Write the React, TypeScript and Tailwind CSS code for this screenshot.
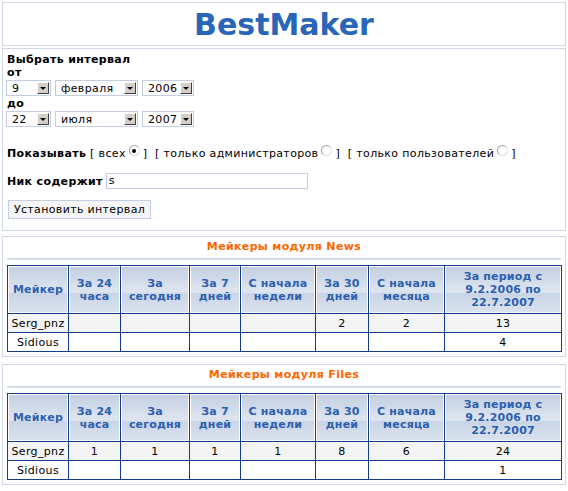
import React from "react";

const headers: React.ReactNode[] = [
  "Мейкер",
  <>За 24<br />часа</>,
  <>За<br />сегодня</>,
  <>За 7<br />дней</>,
  <>С начала<br />недели</>,
  <>За 30<br />дней</>,
  <>С начала<br />месяца</>,
  <>За период с<br />9.2.2006 по<br />22.7.2007</>,
];

const colWidths = [61, 52, 69, 51, 75, 53, 76, 117];

type Row = { name: string; values: string[] };

const newsRows: Row[] = [
  { name: "Serg_pnz", values: ["", "", "", "", "2", "2", "13"] },
  { name: "Sidious", values: ["", "", "", "", "", "", "4"] },
];

const filesRows: Row[] = [
  { name: "Serg_pnz", values: ["1", "1", "1", "1", "8", "6", "24"] },
  { name: "Sidious", values: ["", "", "", "", "", "", "1"] },
];

function Select({ value, className }: { value: string; className: string }) {
  return (
    <div
      className={`flex items-center h-[16px] border border-[#c5cde3] bg-white pl-[5px] pr-[1px] ${className}`}
    >
      <span className="flex-1 leading-none">{value}</span>
      <span className="flex items-center justify-center w-[12px] h-[12px] bg-[#d4d0c8] border border-t-white border-l-white border-b-[#404040] border-r-[#404040]">
        <span className="block w-0 h-0 border-x-[3px] border-x-transparent border-t-[3px] border-t-black" />
      </span>
    </div>
  );
}

function Radio({ checked }: { checked?: boolean }) {
  return (
    <span className="inline-flex items-center justify-center w-[11px] h-[11px] rounded-full border border-[#a0a0a0] border-b-[#e0e0e0] border-r-[#e0e0e0] bg-white align-top relative top-[-2px] mx-[3px]">
      {checked && <span className="block w-[4px] h-[4px] rounded-full bg-black" />}
    </span>
  );
}

function StatsTable({ title, rows }: { title: string; rows: Row[] }) {
  return (
    <div className="border border-[#d0d7e9] px-[3px] pt-[3px] pb-[4px]">
      <div className="text-center font-bold text-[#ff6600] h-[13px] leading-[13px]">{title}</div>
      <div className="mx-[1px] mt-[5px] h-[2px] bg-[#d5dbea]" />
      <table className="mt-[5px] ml-[1px] border-collapse table-fixed w-[555px]">
        <colgroup>
          {colWidths.map((w, i) => (
            <col key={i} style={{ width: w }} />
          ))}
        </colgroup>
        <thead>
          <tr>
            {headers.map((h, i) => (
              <th
                key={i}
                className="h-[48px] p-0 border border-[#143c8c] text-center align-middle font-bold text-[#2b5fae] leading-[13px] tracking-[0.2px] shadow-[inset_0_0_0_1px_#fff] bg-[linear-gradient(to_bottom,#c2cee1_0%,#dfe6f0_55%,#c8d4e6_57%,#dce3ee_100%)]"
              >
                {h}
              </th>
            ))}
          </tr>
        </thead>
        <tbody>
          {rows.map((r, ri) => (
            <tr key={r.name} className={ri === 0 ? "bg-[#f4f4f4]" : "bg-white"}>
              <td className="h-[19px] p-0 border border-[#143c8c] text-center">{r.name}</td>
              {r.values.map((v, vi) => (
                <td key={vi} className="h-[19px] p-0 border border-[#143c8c] text-center">
                  {v}
                </td>
              ))}
            </tr>
          ))}
        </tbody>
      </table>
    </div>
  );
}

export default function App() {
  return (
    <div className="w-[568px] h-[491px] bg-white p-[2px] font-['DejaVu_Sans',Verdana,sans-serif] text-[11px] leading-[13px] tracking-[0.35px] text-black">
      <div className="w-[564px] border border-[#d0d7e9] h-[44px] flex items-center justify-center">
        <h1 className="text-[30px] leading-none font-bold tracking-normal text-[#2a66b8] mt-[1px]">BestMaker</h1>
      </div>

      <div className="w-[564px] mt-[2px] border border-[#d0d7e9] pl-[4px] pt-[4px] h-[183px]">
        <div className="font-bold">Выбрать интервал</div>
        <div className="font-bold">от</div>
        <div className="flex gap-[4px] mt-[1px] -ml-[1px]">
          <Select value="9" className="w-[45px]" />
          <Select value="февраля" className="w-[83px]" />
          <Select value="2006" className="w-[52px]" />
        </div>
        <div className="font-bold mt-[1px]">до</div>
        <div className="flex gap-[4px] mt-[1px] -ml-[1px]">
          <Select value="22" className="w-[45px]" />
          <Select value="июля" className="w-[83px]" />
          <Select value="2007" className="w-[52px]" />
        </div>

        <div className="mt-[20px] whitespace-nowrap">
          <span className="font-bold">Показывать</span> [ всех
          <Radio checked />] &nbsp;[ только администраторов
          <Radio />] &nbsp;[ только пользователей
          <Radio />]
        </div>

        <div className="mt-[13px] flex items-center">
          <span className="font-bold">Ник содержит</span>
          <div className="ml-[3px] w-[202px] h-[16px] border border-[#c5cde3] bg-white pl-[2px] leading-[14px]">
            s
          </div>
        </div>

        <button className="mt-[11px] ml-[1px] w-[143px] h-[19px] border border-[#c5cde3] bg-[#f5f5f5] text-[11px] leading-none tracking-[0.35px]">
          Установить интервал
        </button>
      </div>

      <div className="w-[564px] mt-[5px]">
        <StatsTable title="Мейкеры модуля News" rows={newsRows} />
      </div>
      <div className="w-[564px] mt-[7px]">
        <StatsTable title="Мейкеры модуля Files" rows={filesRows} />
      </div>
    </div>
  );
}
